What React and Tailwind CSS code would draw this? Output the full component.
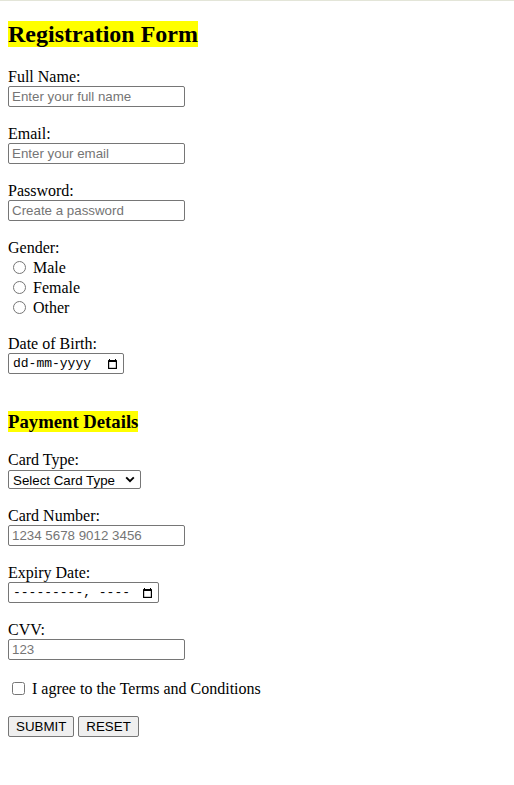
import { useState } from 'react';

const serif = "font-['Liberation_Serif','Times_New_Roman',serif]";
const sans = "font-['Liberation_Sans',Arial,sans-serif]";
const inputCls = `block w-[177px] h-[21px] border border-[#767676] rounded-[2px] px-[3px] text-[13.33px] text-black bg-white placeholder:text-[#757575] outline-none ${sans}`;
const btnCls = `h-[21px] px-[7px] border border-[#767676] rounded-[2px] bg-[#efefef] text-[13.33px] text-black ${sans}`;

function CalendarIcon() {
  return (
    <svg width="9" height="10" viewBox="0 0 9 10" className="shrink-0">
      <rect x="1" y="0" width="1" height="1" fill="#000" />
      <rect x="7" y="0" width="1" height="1" fill="#000" />
      <rect x="0" y="1" width="9" height="9" rx="0.5" fill="#000" />
      <rect x="1.2" y="3" width="6.6" height="5.8" fill="#fff" />
    </svg>
  );
}

function Field({ label, children }) {
  return (
    <div className="mb-[18px]">
      <label className="block h-[18px] leading-[18px] text-[16px]">{label}</label>
      {children}
    </div>
  );
}

function FakeDate({ text, width }) {
  return (
    <div
      className={`flex items-center justify-between h-[21px] ${width} border border-[#767676] rounded-[2px] bg-white pl-[4px] pr-[6px]`}
    >
      <span className="font-['Liberation_Mono','Courier_New',monospace] text-[13px] leading-none text-black whitespace-pre">
        {text}
      </span>
      <CalendarIcon />
    </div>
  );
}

export default function App() {
  const [gender, setGender] = useState('');
  const [agree, setAgree] = useState(false);

  const radios = ['Male', 'Female', 'Other'];

  return (
    <div className={`min-h-[785px] bg-white text-black ${serif}`}>
      <div className="h-px bg-[#e3e5d8]" />
      <div className="px-2">
        <h2 className="mt-[20px] text-[24px] font-bold leading-[27px]">
          <span className="bg-[#ffff00]">Registration Form</span>
        </h2>

        <form className="mt-[20px]" onSubmit={(e) => e.preventDefault()}>
          <Field label="Full Name:">
            <input type="text" placeholder="Enter your full name" className={inputCls} />
          </Field>
          <Field label="Email:">
            <input type="email" placeholder="Enter your email" className={inputCls} />
          </Field>
          <Field label="Password:">
            <input type="password" placeholder="Create a password" className={inputCls} />
          </Field>

          <div className="mb-[18px]">
            <div className="h-[18px] leading-[18px] text-[16px]">Gender:</div>
            {radios.map((r) => (
              <label key={r} className="flex items-start h-[20px] text-[16px]">
                <input
                  type="radio"
                  name="gender"
                  checked={gender === r}
                  onChange={() => setGender(r)}
                  className="w-[13px] h-[13px] mt-[3.5px] ml-[5px] mr-[3px]"
                />
                <span className="ml-[4px] leading-[18px] mt-[1.5px]">{r}</span>
              </label>
            ))}
          </div>

          <div className="mb-[37px]">
            <label className="block h-[18px] leading-[18px] text-[16px]">Date of Birth:</label>
            <FakeDate text="dd-mm-yyyy" width="w-[116px]" />
          </div>

          <h3 className="text-[18.72px] font-bold leading-[22px] mb-[18px]">
            <span className="bg-[#ffff00]">Payment Details</span>
          </h3>

          <div className="mb-[18px]">
            <label className="block h-[18px] leading-[18px] text-[16px]">Card Type:</label>
            <div className="relative mt-[1px] w-[133px]">
              <select
                defaultValue=""
                className={`block w-[133px] h-[19px] border border-[#767676] rounded-[2px] bg-white pl-[4px] text-[13.33px] text-black appearance-none outline-none ${sans}`}
              >
                <option value="">Select Card Type</option>
                <option value="visa">Visa</option>
                <option value="mastercard">MasterCard</option>
                <option value="amex">American Express</option>
              </select>
              <svg
                width="10"
                height="7"
                viewBox="0 0 10 7"
                className="absolute right-[6px] top-[6px] pointer-events-none"
              >
                <path d="M1.2 1.3 5 5.1 8.8 1.3" fill="none" stroke="#000" strokeWidth="1.9" />
              </svg>
            </div>
          </div>

          <Field label="Card Number:">
            <input type="text" placeholder="1234 5678 9012 3456" className={inputCls} />
          </Field>

          <div className="mb-[18px]">
            <label className="block h-[18px] leading-[18px] text-[16px]">Expiry Date:</label>
            <FakeDate text="---------, ----" width="w-[151px]" />
          </div>

          <Field label="CVV:">
            <input type="text" placeholder="123" className={inputCls} />
          </Field>

          <label className="flex items-start h-[20px] text-[16px]">
            <input
              type="checkbox"
              checked={agree}
              onChange={(e) => setAgree(e.target.checked)}
              className="w-[13px] h-[13px] mt-[4px] ml-[4px] mr-[3px]"
            />
            <span className="ml-[4px] leading-[18px] mt-[2px]">I agree to the Terms and Conditions</span>
          </label>

          <div className="flex gap-[4px] mt-[18px]">
            <button type="submit" className={btnCls}>
              SUBMIT
            </button>
            <button
              type="reset"
              onClick={() => {
                setGender('');
                setAgree(false);
              }}
              className={btnCls}
            >
              RESET
            </button>
          </div>
        </form>
      </div>
    </div>
  );
}
